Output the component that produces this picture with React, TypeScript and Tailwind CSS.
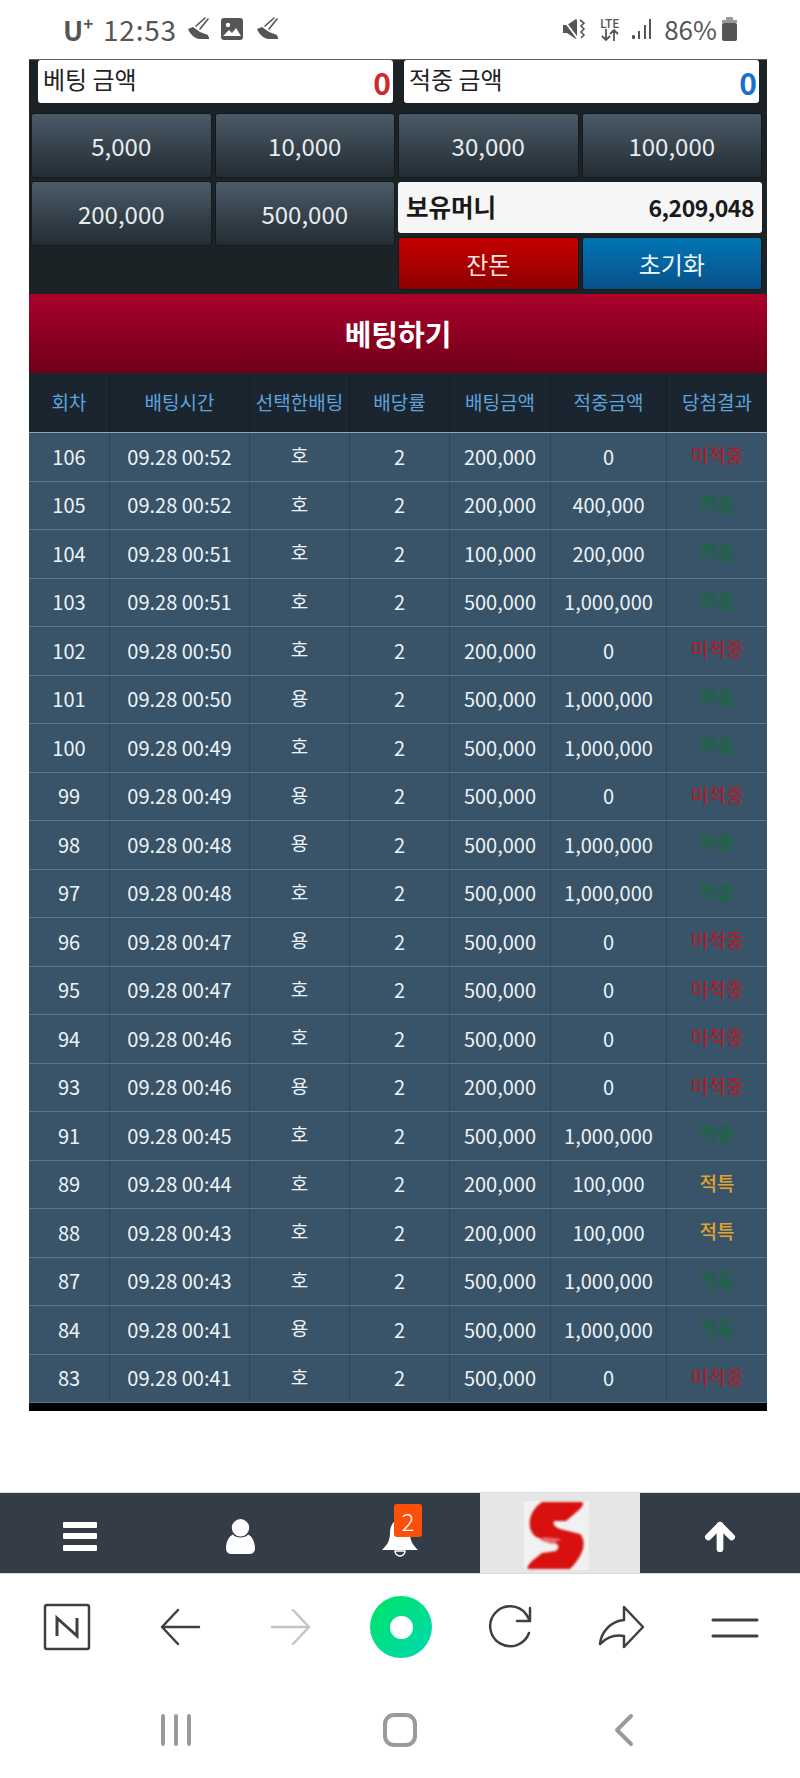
import { ArrowUp } from 'lucide-react';

const topAmounts = ['5,000', '10,000', '30,000', '100,000'];
const lowerAmounts = ['200,000', '500,000'];
const headers = ['회차', '배팅시간', '선택한배팅', '배당률', '배팅금액', '적중금액', '당첨결과'];

const rows: [string, string, string, string, string, string][] = [
  ['106', '09.28 00:52', '호', '200,000', '0', '미적중'],
  ['105', '09.28 00:52', '호', '200,000', '400,000', '적중'],
  ['104', '09.28 00:51', '호', '100,000', '200,000', '적중'],
  ['103', '09.28 00:51', '호', '500,000', '1,000,000', '적중'],
  ['102', '09.28 00:50', '호', '200,000', '0', '미적중'],
  ['101', '09.28 00:50', '용', '500,000', '1,000,000', '적중'],
  ['100', '09.28 00:49', '호', '500,000', '1,000,000', '적중'],
  ['99', '09.28 00:49', '용', '500,000', '0', '미적중'],
  ['98', '09.28 00:48', '용', '500,000', '1,000,000', '적중'],
  ['97', '09.28 00:48', '호', '500,000', '1,000,000', '적중'],
  ['96', '09.28 00:47', '용', '500,000', '0', '미적중'],
  ['95', '09.28 00:47', '호', '500,000', '0', '미적중'],
  ['94', '09.28 00:46', '호', '500,000', '0', '미적중'],
  ['93', '09.28 00:46', '용', '200,000', '0', '미적중'],
  ['91', '09.28 00:45', '호', '500,000', '1,000,000', '적중'],
  ['89', '09.28 00:44', '호', '200,000', '100,000', '적특'],
  ['88', '09.28 00:43', '호', '200,000', '100,000', '적특'],
  ['87', '09.28 00:43', '호', '500,000', '1,000,000', '적중'],
  ['84', '09.28 00:41', '용', '500,000', '1,000,000', '적중'],
  ['83', '09.28 00:41', '호', '500,000', '0', '미적중'],
];

const gridCols = 'grid grid-cols-[81px_140px_100px_100px_101px_116px_100px]';

function resultColor(result: string) {
  if (result === '미적중') return 'text-[#a81f2c]';
  if (result === '적중') return 'text-[#17693a]';
  return 'text-[#e0a32e]';
}

function Shoe() {
  return (
    <svg width="23" height="24" viewBox="0 0 23 24" fill="none">
      <path d="M9 9L18 1M13 12L21 2" stroke="#555" strokeWidth="1.6" strokeLinecap="round" />
      <path d="M1 12l5-2 7 5 8 3 1 3v1H12C7 21 3 17 1 12z" fill="#555" />
    </svg>
  );
}

function StatusBar() {
  return (
    <div className="h-[59px] flex items-start justify-between pl-[63px] pr-[62px] pt-[15px] text-[#555]">
      <div className="flex items-center h-[28px]">
        <span className="text-[27px] font-bold leading-none w-[30px] flex">
          U<span className="text-[17px] -mt-[2px]">+</span>
        </span>
        <span className="text-[28px] leading-none ml-[10px] tracking-[0.8px]">12:53</span>
        <span className="ml-[10px]"><Shoe /></span>
        <svg className="ml-[11px]" width="22" height="22" viewBox="0 0 22 22">
          <rect width="22" height="22" rx="3" fill="#555" />
          <circle cx="7" cy="7" r="2.2" fill="#fff" />
          <path d="M2 18l6-6 3 3 4-5 5 8z" fill="#fff" />
        </svg>
        <span className="ml-[13px]"><Shoe /></span>
      </div>
      <div className="flex items-center h-[28px]">
        <svg width="24" height="24" viewBox="0 0 24 24" fill="#555">
          <path d="M1 8h4l9-6 1 1v18l-1 1-9-6H1z" />
          <path d="M1 2l15 20" stroke="#fff" strokeWidth="2" />
          <path d="M18 3l4 3-3 3 3 3-3 3 3 3-3 3" stroke="#555" strokeWidth="1.6" fill="none" />
        </svg>
        <div className="ml-[11px] flex flex-col items-center w-[25px]">
          <span className="text-[12px] font-medium leading-[12px]">LTE</span>
          <svg width="18" height="12" viewBox="0 0 18 12" fill="none" stroke="#555" strokeWidth="1.8">
            <path d="M5 0v10M1 7l4 4 4-4M13 12V2M9 5l4-4 4 4" />
          </svg>
        </div>
        <svg className="ml-[9px]" width="22" height="22" viewBox="0 0 22 22" fill="#555">
          <rect x="1" y="17" width="3" height="4" rx="1" />
          <rect x="7" y="13" width="2" height="8" />
          <rect x="13" y="7" width="2" height="14" />
          <rect x="18" y="1" width="2" height="20" />
        </svg>
        <span className="text-[26px] leading-none ml-[11px]">86%</span>
        <svg className="ml-[4px]" width="17" height="24" viewBox="0 0 17 24" fill="#555">
          <rect x="5" y="0" width="7" height="4" rx="1" fill="#999" />
          <rect x="1" y="3" width="15" height="3" fill="#999" />
          <rect x="1" y="6" width="15" height="18" rx="2" />
        </svg>
      </div>
    </div>
  );
}

function AmountField({ label, color }: { label: string; color: string }) {
  return (
    <div className="h-[43px] flex-1 bg-white rounded-[3px] flex items-center justify-between pl-[5px] pr-[2px]">
      <span className="text-[24px] leading-none text-[#222] -mt-[6px]">{label}</span>
      <span className={`text-[30px] font-bold leading-none ${color}`}>0</span>
    </div>
  );
}

function AmountButton({ amount }: { amount: string }) {
  return (
    <div className="h-[65px] rounded-[3px] border border-[#14191c] bg-gradient-to-b from-[#4a5b68] to-[#232d34] flex items-center justify-center text-[24px] text-[#e8ecef]">
      {amount}
    </div>
  );
}

function BettingPanel() {
  return (
    <div className="bg-[#1c2327] border-t border-[#59646b]">
      <div className="flex gap-[11px] pl-[9px] pr-[8px]">
        <AmountField label="베팅 금액" color="text-[#d3282d]" />
        <AmountField label="적중 금액" color="text-[#1a6fd0]" />
      </div>
      <div className="pl-[2px] pr-[5px] pt-[10px] pb-[4px]">
        <div className="grid grid-cols-4 gap-[3px]">
          {topAmounts.map((amount) => (
            <AmountButton key={amount} amount={amount} />
          ))}
        </div>
        <div className="grid grid-cols-2 gap-[3px] mt-[3px]">
          <div className="grid grid-cols-2 gap-[3px] items-start">
            {lowerAmounts.map((amount) => (
              <AmountButton key={amount} amount={amount} />
            ))}
          </div>
          <div className="flex flex-col gap-[4px]">
            <div className="h-[51px] mt-[1px] rounded-[3px] bg-[#f6f6f6] flex items-center justify-between pl-[8px] pr-[8px] text-[#1a1a1a] font-bold">
              <span className="text-[24.5px] leading-none">보유머니</span>
              <span className="text-[23px] leading-none tracking-[-0.5px]">6,209,048</span>
            </div>
            <div className="grid grid-cols-2 gap-[3px]">
              <div className="h-[53px] rounded-[3px] border border-[#14191c] bg-gradient-to-b from-[#c40000] to-[#8f0000] flex items-center justify-center text-[24px] text-[#f6e3e3]">
                잔돈
              </div>
              <div className="h-[53px] rounded-[3px] border border-[#14191c] bg-gradient-to-b from-[#0075b4] to-[#075288] flex items-center justify-center text-[24px] text-[#eef6fb]">
                초기화
              </div>
            </div>
          </div>
        </div>
      </div>
      <div className="h-[79px] rounded-t-[3px] bg-gradient-to-b from-[#ab012b] to-[#70001a] flex items-center justify-center text-white text-[29px] font-bold">
        베팅하기
      </div>
    </div>
  );
}

function BetTable() {
  return (
    <div className="bg-[#395469]">
      <div className={`${gridCols} h-[60px] bg-[#1a2530] border-b border-[#8fa5b5]`}>
        {headers.map((header) => (
          <div
            key={header}
            className="flex items-center justify-center border-r border-[#141d25] last:border-r-0 text-[19px] text-[#5fa3da] whitespace-nowrap"
          >
            {header}
          </div>
        ))}
      </div>
      {rows.map((row) => (
        <div key={row[0]} className={`${gridCols} h-[48.5px] border-b border-[#5a7890] text-[20px] text-[#eef3f7]`}>
          <div className="flex items-center justify-center border-r border-[#2e4558]">{row[0]}</div>
          <div className="flex items-center justify-center border-r border-[#2e4558] whitespace-nowrap">{row[1]}</div>
          <div className="flex items-center justify-center border-r border-[#2e4558] pb-[3px] text-[19px]">{row[2]}</div>
          <div className="flex items-center justify-center border-r border-[#2e4558]">2</div>
          <div className="flex items-center justify-center border-r border-[#2e4558]">{row[3]}</div>
          <div className="flex items-center justify-center border-r border-[#2e4558]">{row[4]}</div>
          <div className={`flex items-center justify-center pb-[3px] text-[19px] font-medium ${resultColor(row[5])}`}>{row[5]}</div>
        </div>
      ))}
      <div className="h-[8px] bg-black" />
    </div>
  );
}

function BottomTabs() {
  return (
    <div className="mt-[81px] h-[82px] grid grid-cols-5 bg-[#343d47] border-y border-[#dcdcdc]">
      <div className="flex items-center justify-center pt-[6px]">
        <svg width="34" height="29" viewBox="0 0 34 29" fill="#fff">
          <rect width="34" height="6" rx="1" />
          <rect y="11" width="34" height="6" rx="1" />
          <rect y="23" width="34" height="6" rx="1" />
        </svg>
      </div>
      <div className="flex items-center justify-center pt-[6px]">
        <svg width="29" height="35" viewBox="0 0 30 36" fill="#fff">
          <circle cx="15" cy="9" r="9" />
          <path d="M7 16c3 4 13 4 16 0 4 2 7 8 7 14 0 4-2 6-5 6H5c-3 0-5-2-5-6 0-6 3-12 7-14z" />
        </svg>
      </div>
      <div className="relative flex items-center justify-center pt-[10px]">
        <svg width="38" height="38" viewBox="0 0 38 38" fill="#fff">
          <path d="M19 1c7 0 10 6 10 13 0 8 3 12 8 17H1c5-5 8-9 8-17C9 7 12 1 19 1z" />
          <path d="M14 32h10a5 5 0 0 1-10 0z" fill="none" stroke="#fff" strokeWidth="1.5" />
        </svg>
        <span className="absolute left-[74px] top-[11px] w-[28px] h-[33px] rounded-[3px] bg-[#fb4f0a] text-white text-[24px] font-light leading-[33px] text-center">
          2
        </span>
      </div>
      <div className="bg-[#e6e6e6] flex items-end justify-center pb-[3px] pr-[8px]">
        <div className="w-[65px] h-[69px] bg-[#f1f1f1]">
          <svg width="65" height="69" viewBox="0 0 65 69" className="blur-[1px]">
            <path
              d="M18 1L58 1Q61 3 55 9L42 20L30 20Q28 25 36 28L56 33Q61 38 59 48Q56 58 46 68L4 68Q2 66 8 60L18 52L32 50Q38 44 30 42L12 36Q4 30 6 18Q8 8 18 1z"
              fill="#d81010"
            />
            <path d="M20 36l18 2-10 5-12-4z" fill="#e86a6a" />
          </svg>
        </div>
      </div>
      <div className="flex items-center justify-center pt-[7px] text-white">
        <ArrowUp size={40} strokeWidth={4} />
      </div>
    </div>
  );
}

function BrowserBar() {
  return (
    <div className="h-[133px] flex items-start relative">
      <svg className="absolute left-[43px] top-[29px]" width="48" height="48" viewBox="0 0 48 48" fill="none">
        <rect x="2" y="2" width="44" height="44" rx="2" stroke="#3c4043" strokeWidth="2.5" />
        <path d="M14 33V15L34 33V15" stroke="#3c4043" strokeWidth="3" />
      </svg>
      <svg className="absolute left-[159px] top-[33px]" width="42" height="40" viewBox="0 0 42 40" fill="none" stroke="#3c4043" strokeWidth="2.5" strokeLinecap="round" strokeLinejoin="round">
        <path d="M40 20H3M19 3L3 20l16 17" />
      </svg>
      <svg className="absolute left-[270px] top-[33px]" width="42" height="40" viewBox="0 0 42 40" fill="none" stroke="#c4c4c4" strokeWidth="2.5" strokeLinecap="round" strokeLinejoin="round">
        <path d="M2 20h37M23 3l16 17-16 17" />
      </svg>
      <div className="absolute left-[370px] top-[22px] w-[62px] h-[62px] rounded-full bg-gradient-to-br from-[#00e35f] to-[#00d8b0] flex items-center justify-center">
        <div className="w-[23px] h-[23px] rounded-full bg-white" />
      </div>
      <svg className="absolute left-[488px] top-[31px]" width="46" height="46" viewBox="0 0 46 46" fill="none" stroke="#3c4043" strokeWidth="2.5" strokeLinecap="round" strokeLinejoin="round">
        <path d="M41 28A20 20 0 1 1 38 9l3 5M42 3v13H29" />
      </svg>
      <svg className="absolute left-[598px] top-[31px]" width="48" height="44" viewBox="0 0 48 44" fill="none" stroke="#3c4043" strokeWidth="2.5" strokeLinecap="round" strokeLinejoin="round">
        <path d="M26 2l19 20-19 20V31C16 29 8 33 2 39c1-12 11-23 24-24z" />
      </svg>
      <svg className="absolute left-[711px] top-[43px]" width="48" height="22" viewBox="0 0 48 22" stroke="#3c4043" strokeWidth="3" strokeLinecap="round">
        <path d="M2 3h44M2 19h44" />
      </svg>
    </div>
  );
}

function NavBar() {
  return (
    <div className="flex-1 relative">
      <svg className="absolute left-[160px] top-[6px]" width="32" height="34" viewBox="0 0 32 34" stroke="#9a9a9a" strokeWidth="4" strokeLinecap="round">
        <path d="M3 3v28M16 3v28M29 3v28" />
      </svg>
      <svg className="absolute left-[383px] top-[6px]" width="34" height="34" viewBox="0 0 34 34" fill="none" stroke="#9a9a9a" strokeWidth="4">
        <rect x="2" y="2" width="30" height="30" rx="9" />
      </svg>
      <svg className="absolute left-[613px] top-[6px]" width="22" height="34" viewBox="0 0 22 34" fill="none" stroke="#9a9a9a" strokeWidth="4" strokeLinecap="round" strokeLinejoin="round">
        <path d="M18 3L4 17l14 14" />
      </svg>
    </div>
  );
}

export default function App() {
  return (
    <div className="w-[800px] h-[1778px] bg-white flex flex-col overflow-hidden font-['Noto_Sans_CJK_KR','Noto_Sans',sans-serif]">
      <StatusBar />
      <div className="mx-[29px] w-[738px]">
        <BettingPanel />
        <BetTable />
      </div>
      <BottomTabs />
      <BrowserBar />
      <NavBar />
    </div>
  );
}
